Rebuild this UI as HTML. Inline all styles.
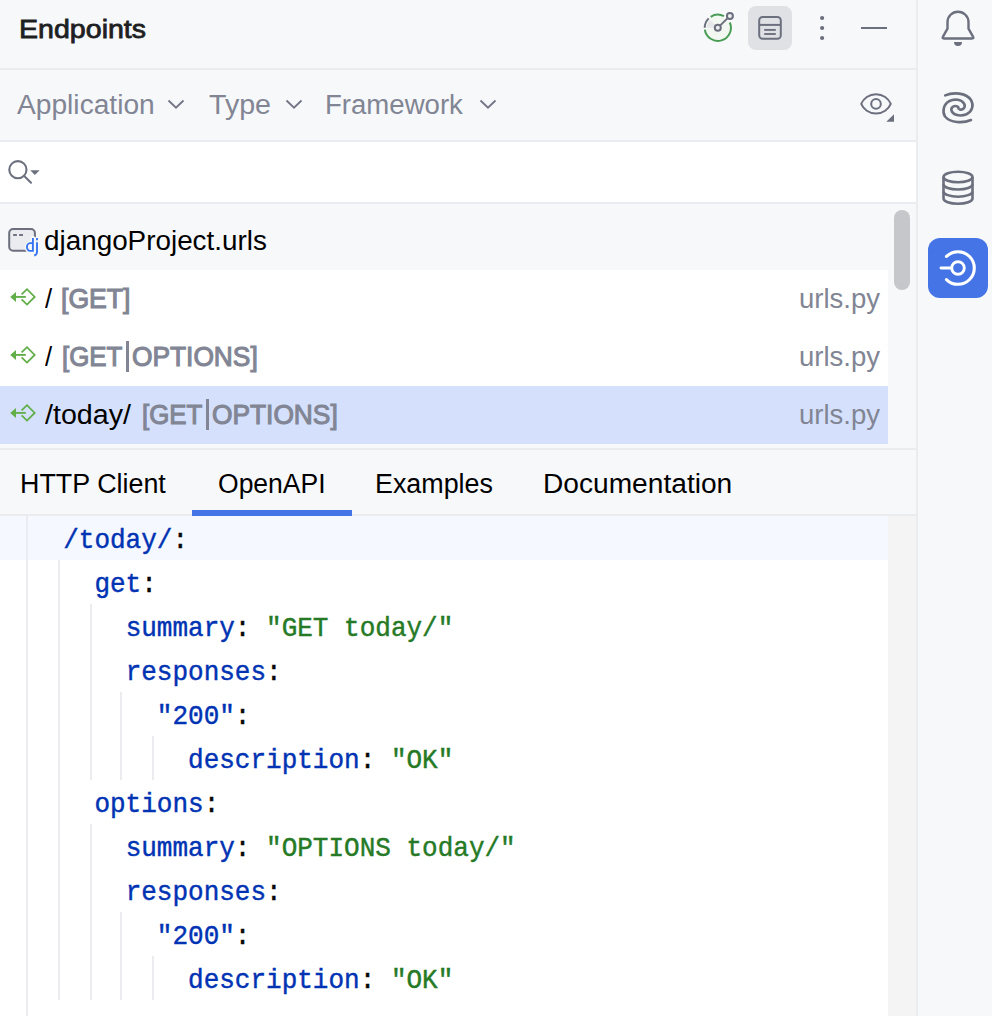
<!DOCTYPE html>
<html><head><meta charset="utf-8">
<style>
html,body{margin:0;padding:0;}
body{width:992px;height:1016px;overflow:hidden;background:#F7F8FA;position:relative;font-family:"Liberation Sans",sans-serif;}
.a{position:absolute;}
.t{position:absolute;font-size:26px;line-height:26px;white-space:pre;}
.t{transform-origin:0 0}
.b{font-size:27.5px;color:#818594;-webkit-text-stroke:1.1px #818594}
.u{left:798.8px;font-size:27px;color:#818594;transform:scaleX(1.0192)}
.hl{position:absolute;background:#EBECF0;}
.code{position:absolute;left:0;font-family:"Liberation Mono",monospace;font-size:28px;transform:scaleX(0.92857);transform-origin:0 0;-webkit-text-stroke-width:0.45px;line-height:44px;white-space:pre;height:44px;}
.k{color:#0033B3}.s{color:#267A26}.p{color:#080808}
.g{position:absolute;width:2px;background:#EBECF0;}
</style></head><body>
<!-- header -->
<div class="t" style="left:18.9px;top:16px;color:#1E1F22;-webkit-text-stroke:0.8px #1E1F22;transform:scaleX(1.0991)">Endpoints</div>
<div class="hl" style="left:0;top:68px;width:916px;height:2px"></div>
<!-- filter row -->
<div class="t" style="left:16.5px;top:92px;font-size:27px;color:#818594;transform:scaleX(1.0431)">Application</div>
<div class="t" style="left:208.9px;top:92px;font-size:27px;color:#818594;transform:scaleX(1.0596)">Type</div>
<div class="t" style="left:325.2px;top:92px;font-size:27px;color:#818594;transform:scaleX(1.0211)">Framework</div>
<div class="hl" style="left:0;top:140px;width:916px;height:2px"></div>
<!-- search row -->
<div class="a" style="left:0;top:142px;width:916px;height:60px;background:#fff"></div>
<div class="hl" style="left:0;top:202px;width:916px;height:2px"></div>
<!-- tree -->
<div class="a" style="left:0;top:270px;width:888px;height:116px;background:#fff"></div>
<div class="a" style="left:0;top:386px;width:888px;height:58px;background:#D5E1FC"></div>
<div class="a" style="left:894px;top:210px;width:16px;height:80px;border-radius:8px;background:#C6C7CA"></div>
<div class="t" style="left:43.8px;top:228px;font-size:27px;color:#000;transform:scaleX(1.0313)">djangoProject.urls</div>
<div class="t" style="left:44.9px;top:286px;font-size:27px;color:#000;transform:scaleX(0.95)">/</div>
<div class="t b" style="left:61.13px;top:286px;transform:scaleX(0.9671)">[GET]</div>
<div class="t" style="left:44.9px;top:344px;font-size:27px;color:#000;transform:scaleX(0.95)">/</div>
<div class="t b" style="left:61.56px;top:344px;transform:scaleX(0.9413)">[GET</div>
<div class="a" style="left:126px;top:341px;width:2.6px;height:31px;background:#818594"></div>
<div class="t b" style="left:132.24px;top:344px;transform:scaleX(0.9566)">OPTIONS]</div>
<div class="t" style="left:44.7px;top:402px;font-size:27px;color:#000;transform:scaleX(1.0605)">/today/</div>
<div class="t b" style="left:141.56px;top:402px;transform:scaleX(0.9413)">[GET</div>
<div class="a" style="left:206px;top:399px;width:2.6px;height:31px;background:#818594"></div>
<div class="t b" style="left:212.24px;top:402px;transform:scaleX(0.9566)">OPTIONS]</div>
<div class="t u" style="top:286px">urls.py</div>
<div class="t u" style="top:344px">urls.py</div>
<div class="t u" style="top:402px">urls.py</div>
<div class="hl" style="left:0;top:448px;width:916px;height:2px"></div>
<!-- tabs -->
<div class="t" style="left:19.9px;top:471px;font-size:27px;color:#000;transform:scaleX(0.9952)">HTTP Client</div>
<div class="t" style="left:217.8px;top:471px;font-size:27px;color:#000;transform:scaleX(0.9821)">OpenAPI</div>
<div class="t" style="left:375px;top:471px;font-size:27px;color:#000;transform:scaleX(0.9948)">Examples</div>
<div class="t" style="left:542.7px;top:471px;font-size:27px;color:#000;transform:scaleX(1.0421)">Documentation</div>
<div class="hl" style="left:0;top:514px;width:916px;height:2px"></div>
<div class="a" style="left:192px;top:510px;width:160px;height:6px;background:#4574E6"></div>
<!-- editor -->
<div class="a" style="left:0;top:516px;width:888px;height:500px;background:#fff"></div>
<div class="a" style="left:0;top:516px;width:888px;height:44px;background:#F5F8FE"></div>
<div class="a" style="left:888px;top:516px;width:28px;height:500px;background:#F4F4F4"></div>
<!-- guides -->
<div class="g" style="left:26px;top:516px;height:500px"></div>
<div class="g" style="left:58px;top:560px;height:440px"></div>
<div class="g" style="left:90px;top:604px;height:176px"></div>
<div class="g" style="left:90px;top:824px;height:176px"></div>
<div class="g" style="left:120px;top:692px;height:88px"></div>
<div class="g" style="left:120px;top:912px;height:88px"></div>
<div class="g" style="left:152px;top:736px;height:44px"></div>
<div class="g" style="left:152px;top:956px;height:44px"></div>
<!-- code -->
<div class="a" id="codewrap" style="left:0;top:519px;width:888px;">
<div class="code" style="top:0px;left:32px">  <span class="k">/today/</span><span class="p">:</span></div>
<div class="code" style="top:44px;left:32px">    <span class="k">get</span><span class="p">:</span></div>
<div class="code" style="top:88px;left:32px">      <span class="k">summary</span><span class="p">: </span><span class="s">"GET today/"</span></div>
<div class="code" style="top:132px;left:32px">      <span class="k">responses</span><span class="p">:</span></div>
<div class="code" style="top:176px;left:32px">        <span class="k">"200"</span><span class="p">:</span></div>
<div class="code" style="top:220px;left:32px">          <span class="k">description</span><span class="p">: </span><span class="s">"OK"</span></div>
<div class="code" style="top:264px;left:32px">    <span class="k">options</span><span class="p">:</span></div>
<div class="code" style="top:308px;left:32px">      <span class="k">summary</span><span class="p">: </span><span class="s">"OPTIONS today/"</span></div>
<div class="code" style="top:352px;left:32px">      <span class="k">responses</span><span class="p">:</span></div>
<div class="code" style="top:396px;left:32px">        <span class="k">"200"</span><span class="p">:</span></div>
<div class="code" style="top:440px;left:32px">          <span class="k">description</span><span class="p">: </span><span class="s">"OK"</span></div>
</div>
<!-- right stripe separator -->
<div class="hl" style="left:916px;top:0;width:2px;height:1016px"></div>
<div class="a" style="left:928px;top:238px;width:60px;height:60px;border-radius:12px;background:#4574E6"></div>
<svg class="a" style="left:0;top:0" width="992" height="1016" viewBox="0 0 992 1016" fill="none" stroke-linecap="butt">
<!-- ring icon -->
<circle cx="717.8" cy="27.8" r="12" fill="#F2F7F2" stroke="none"/>
<path d="M717.8 27.8L710.16 19.89A11 11 0 0 0 706.8 27.8Z" fill="#E6E7EB" stroke="none"/>
<path d="M729.77 22.47A13.1 13.1 0 1 1 704.83 29.62" stroke="#499C54" stroke-width="2"/>
<path d="M710.67 16.81A13.1 13.1 0 0 1 723.95 16.23" stroke="#499C54" stroke-width="2"/>
<path d="M704.70 27.80A13.1 13.1 0 0 1 708.70 18.38" stroke="#6C707E" stroke-width="2"/>
<line x1="720.0" y1="25.6" x2="727.6999999999999" y2="18.1" stroke="#6C707E" stroke-width="2"/>
<circle cx="717.8" cy="27.8" r="3" fill="#EDEEF1" stroke="#6C707E" stroke-width="2"/>
<circle cx="729.9" cy="15.9" r="3" fill="#EDEEF1" stroke="#6C707E" stroke-width="2"/>
<!-- toggle button -->
<rect x="748" y="6" width="44" height="44" rx="8" fill="#DFE1E5" stroke="none"/>
<rect x="759.2" y="17" width="21.6" height="21.7" rx="3.5" stroke="#6C707E" stroke-width="2"/>
<line x1="759" y1="24.9" x2="781" y2="24.9" stroke="#6C707E" stroke-width="2"/>
<line x1="764.2" y1="29.9" x2="775.8" y2="29.9" stroke="#6C707E" stroke-width="1.9"/>
<line x1="764.2" y1="34" x2="775.8" y2="34" stroke="#6C707E" stroke-width="1.9"/>
<!-- kebab -->
<circle cx="822.1" cy="18" r="2.1" fill="#6C707E" stroke="none"/>
<circle cx="822.1" cy="28" r="2.1" fill="#6C707E" stroke="none"/>
<circle cx="822.1" cy="38" r="2.1" fill="#6C707E" stroke="none"/>
<line x1="861" y1="28" x2="887" y2="28" stroke="#6C707E" stroke-width="2"/>
<!-- chevrons -->
<path d="M168.5 100.5L176 107.6L183.5 100.5" stroke="#737787" stroke-width="1.9"/>
<path d="M286.5 100.5L294 107.6L301.5 100.5" stroke="#737787" stroke-width="1.9"/>
<path d="M480.5 100.5L488 107.6L495.5 100.5" stroke="#737787" stroke-width="1.9"/>
<!-- eye -->
<path d="M861.2 103.9C863.5 98.5 869 94.2 876 94.2C883 94.2 888.5 98.5 890.8 103.9C888.5 109.3 883 113.6 876 113.6C869 113.6 863.5 109.3 861.2 103.9Z" stroke="#6C707E" stroke-width="2" stroke-linejoin="round"/>
<circle cx="876" cy="103.9" r="4.8" stroke="#6C707E" stroke-width="2"/>
<path d="M886.3 121.7L894 121.7L894 114.2Z" fill="#6C707E" stroke="none"/>
<!-- search -->
<circle cx="17.9" cy="169.7" r="8.6" stroke="#6C707E" stroke-width="2.1"/>
<line x1="24.2" y1="176" x2="31" y2="182.8" stroke="#6C707E" stroke-width="2" stroke-linecap="round"/>
<path d="M30.2 170.2H39.6L34.9 175Z" fill="#6C707E" stroke="none"/>
<!-- bell -->
<path d="M947.5 28.6V22.2A10.5 10.5 0 0 1 968.5 22.2V28.6L973 36.6Q974.2 38.5 972 38.5H944Q941.8 38.5 943 36.6Z" stroke="#6C707E" stroke-width="2.4" stroke-linejoin="round"/>
<path d="M954 42A4 4 0 0 0 962 42Z" fill="#6C707E" stroke="none"/>
<!-- spiral -->
<g transform="translate(930 78)" stroke="#6C707E" stroke-width="2.6" stroke-linecap="round">
<path d="M15.2 17.4C23 14 36 14.5 41 22C44 27 42.5 33.5 36.5 36.2C31.5 38.3 24.5 37.8 22 33.8C20 30.5 23 27.3 26.6 28.2C28 28.5 28.6 29.6 28.4 30.6"/>
<path d="M41 42C33 45.5 20.5 45 15 38.5C12 33.5 13.5 26 19.5 23C24.5 20.5 31.5 21.5 34 25.5C36 29 33.5 32 30 31.6"/>
</g>
<!-- database -->
<g stroke="#6C707E" stroke-width="2.6">
<ellipse cx="958" cy="177" rx="14.5" ry="5.3"/>
<path d="M943.5 177V198.5A14.5 5.3 0 0 0 972.5 198.5V177"/>
<path d="M943.5 184.2A14.5 5.3 0 0 0 972.5 184.2"/>
<path d="M943.5 191.4A14.5 5.3 0 0 0 972.5 191.4"/>
</g>
<!-- endpoints stripe button icon -->
<path d="M946.47 256.47A16.3 16.3 0 1 1 946.47 279.53" stroke="#fff" stroke-width="3.1" stroke-linecap="round"/>
<circle cx="958" cy="268" r="6.3" stroke="#fff" stroke-width="2.9"/>
<line x1="941" y1="268" x2="951.7" y2="268" stroke="#fff" stroke-width="2.9" stroke-linecap="round"/>
<!-- django icon -->
<rect x="9.2" y="229" width="25.7" height="21.8" rx="4" fill="#EBECF0" stroke="#6C707E" stroke-width="2"/>
<line x1="13.1" y1="235" x2="16.9" y2="235" stroke="#6C707E" stroke-width="1.9"/>
<line x1="19.1" y1="235" x2="23" y2="235" stroke="#6C707E" stroke-width="1.9"/>
<g stroke="#F7F8FA" stroke-width="5" stroke-linejoin="round" stroke-linecap="round">
<path d="M32.9 238.5V251M32.9 243.6H30A3 3.7 0 0 0 30 250.9H32.9M37 243V252Q37 255 34.2 255.3M37 239.2V239.4"/>
<path d="M30 246L36 246L36 252L30 252Z" fill="#F7F8FA"/>
</g>
<g stroke="#3574F0" stroke-width="1.9">
<path d="M32.9 238V251.8M32.9 243.1H30A3 3.85 0 0 0 30 250.9H32.9"/>
<path d="M37 242.2V252Q37 255 34.2 255.5"/>
<path d="M37 238V240.2"/>
</g>
<!-- arrows -->
<g transform="translate(0 0.0)" stroke="#62AE48">
<path d="M10.2 296.9L16 291.9V301.9Z" fill="#62AE48" stroke="none"/>
<line x1="15" y1="296.9" x2="25.8" y2="296.9" stroke-width="1.9"/>
<path d="M21.6 294.4L27 289.2L34.7 296.9L27 304.6L21.6 299.4" stroke-width="1.8"/>
</g>
<g transform="translate(0 58.0)" stroke="#62AE48">
<path d="M10.2 296.9L16 291.9V301.9Z" fill="#62AE48" stroke="none"/>
<line x1="15" y1="296.9" x2="25.8" y2="296.9" stroke-width="1.9"/>
<path d="M21.6 294.4L27 289.2L34.7 296.9L27 304.6L21.6 299.4" stroke-width="1.8"/>
</g>
<g transform="translate(0 116.0)" stroke="#62AE48">
<path d="M10.2 296.9L16 291.9V301.9Z" fill="#62AE48" stroke="none"/>
<line x1="15" y1="296.9" x2="25.8" y2="296.9" stroke-width="1.9"/>
<path d="M21.6 294.4L27 289.2L34.7 296.9L27 304.6L21.6 299.4" stroke-width="1.8"/>
</g>
</svg>
</body></html>
